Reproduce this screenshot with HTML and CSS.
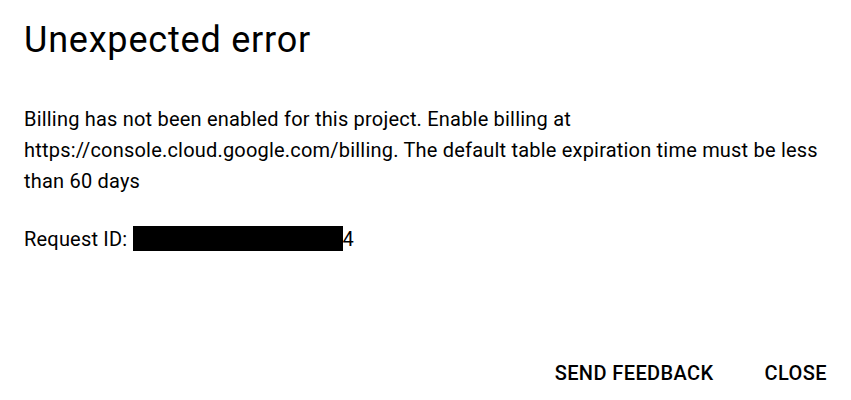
FILE: index.html
```html
<!DOCTYPE html>
<html>
<head>
<meta charset="utf-8">
<link rel="stylesheet" href="styles.css">
</head>
<body>
<div class="dialog">
  <h1 class="title">Unexpected error</h1>
  <p class="message">Billing has not been enabled for this project. Enable billing at https://console.cloud.google.com/billing. The default table expiration time must be less than 60 days</p>
  <p class="request">Request ID: <span class="redacted"></span>4</p>
  <div class="actions">
    <button class="btn">SEND FEEDBACK</button>
    <button class="btn">CLOSE</button>
  </div>
</div>
</body>
</html>
```
FILE: styles.css
```css
html, body {
  margin: 0;
  padding: 0;
  background: #fff;
}
body {
  font-family: Roboto, "Liberation Sans", sans-serif;
  color: #000;
}
.dialog {
  width: 851px;
  height: 400px;
  box-sizing: border-box;
  padding: 18px 24px 0 24px;
  display: flex;
  flex-direction: column;
}
.title {
  margin: 0;
  font-size: 36px;
  font-weight: 400;
  line-height: 44px;
  letter-spacing: 0.8px;
}
.message {
  margin: 42px 0 0 0;
  font-size: 20px;
  line-height: 31px;
  letter-spacing: 0.2px;
}
.request {
  margin: 27px 0 0 0;
  font-size: 20px;
  line-height: 31px;
  letter-spacing: 0.2px;
}
.redacted {
  display: inline-block;
  background: #000;
  width: 210px;
  height: 25px;
  vertical-align: -5px;
}
.actions {
  margin-top: auto;
  display: flex;
  justify-content: flex-end;
  gap: 51px;
  padding: 0 0 15px 0;
}
.btn {
  font-family: Roboto, "Liberation Sans", sans-serif;
  font-weight: 500;
  font-size: 20px;
  line-height: 24px;
  letter-spacing: 0.4px;
  background: none;
  border: none;
  color: #000;
  padding: 0;
  margin: 0;
}
```
